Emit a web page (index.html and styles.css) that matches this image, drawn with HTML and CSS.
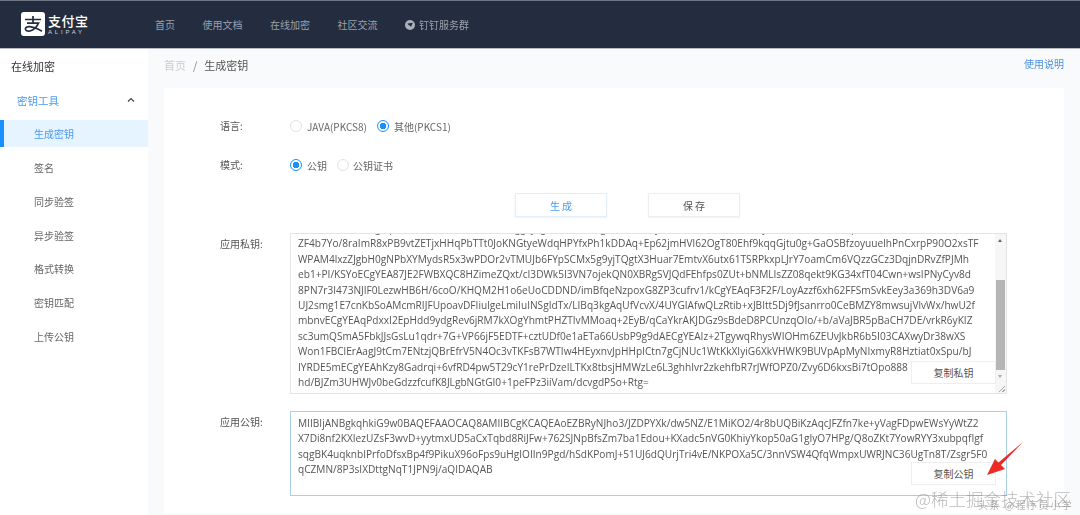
FILE: index.html
```html
<!DOCTYPE html>
<html lang="zh">
<head>
<meta charset="utf-8">
<title>生成密钥</title>
<link rel="stylesheet" href="styles.css">
</head>
<body>
<div class="page">
  <header class="topbar">
    <div class="logo">
      <svg class="logo-mark" viewBox="0 0 24 24" width="24" height="24">
        <rect width="24" height="24" rx="3" fill="#fff"/>
        <path d="M4 7.500h16M12 4v7M6 11.200h11.500c-1.800 3.800-5 7-8.500 7.800-2.800.5-4.600-.5-4.600-2.200 0-2.800 5.600-3.600 16.600 2.400" fill="none" stroke="#232d3f" stroke-width="1.700"/>
      </svg>
      <div class="logo-words">
        <span class="logo-cn">支付宝</span>
        <span class="logo-en">ALIPAY</span>
      </div>
    </div>
    <nav class="nav">
      <a>首页</a>
      <a>使用文档</a>
      <a>在线加密</a>
      <a>社区交流</a>
      <a class="nav-icon">
        <svg viewBox="0 0 10 10" width="10" height="10"><circle cx="5" cy="5" r="5" fill="#aab0ba"/><path d="M2.500 3.500 7.800 2.800 6 7 4.800 5.500 3.500 5z" fill="#232d3f"/></svg>
        钉钉服务群
      </a>
    </nav>
  </header>
  <div class="body">
    <aside class="sidebar">
      <div class="side-title">在线加密</div>
      <div class="side-group"><span>密钥工具</span>
        <svg viewBox="0 0 8 6" width="8" height="6"><path d="M1 4.500 4 1.500 7 4.500" fill="none" stroke="#444" stroke-width="1.200"/></svg>
      </div>
      <ul class="side-list">
        <li class="active">生成密钥</li>
        <li>签名</li>
        <li>同步验签</li>
        <li>异步验签</li>
        <li>格式转换</li>
        <li>密钥匹配</li>
        <li>上传公钥</li>
      </ul>
    </aside>
    <main class="main">
      <div class="crumbs">
        <div><span class="crumb-home">首页</span><span class="crumb-sep">/</span><span class="crumb-now">生成密钥</span></div>
        <a class="help">使用说明</a>
      </div>
      <section class="card">
        <div class="radio-row row-lang">
          <label class="form-label">语言:</label>
          <span class="radio"></span><span class="radio-text wide">JAVA(PKCS8)</span>
          <span class="radio on"></span><span class="radio-text">其他(PKCS1)</span>
        </div>
        <div class="radio-row row-mode">
          <label class="form-label">模式:</label>
          <span class="radio on"></span><span class="radio-text wide">公钥</span>
          <span class="radio"></span><span class="radio-text tight">公钥证书</span>
        </div>
        <div class="actions">
          <button class="btn primary">生 成</button>
          <button class="btn">保 存</button>
        </div>
        <div class="field field-private">
          <label class="form-label top">应用私钥:</label>
          <div class="key-box private">
<pre class="key-text scrolled">MIIEvQIBADANBgkqhkiG9w0BAQEFAASCBKcwggSjAgEAAoIBAQCgRkFHI0mGjf8lkM9heT93Dk1n8TUyIo7b/ivxtRAGIrMCpwkVl+fu
ZF4b7Yo/8raImR8xPB9vtZETjxHHqPbTTt0JoKNGtyeWdqHPYfxPh1kDDAq+Ep62jmHVl62OgT80Ehf9kqqGjtu0g+GaOSBfzoyuuelhPnCxrpP90O2xsTF
WPAM4lxzZJgbH0gNPbXYMydsR5x3wPDOr2vTMUJb6FYpSCMx5g9yjTQgtX3Huar7EmtvX6utx61TSRPkxpLJrY7oamCm6VQzzGCz3DqjnDRvZfPJMh
eb1+PI/KSYoECgYEA87JE2FWBXQC8HZimeZQxt/cI3DWk5I3VN7ojekQN0XBRgSVJQdFEhfps0ZUt+bNMLIsZZ08qekt9KG34xfT04Cwn+wsIPNyCyv8d
8PN7r3I473NJIF0LezwHB6H/6coO/KHQM2H1o6eUoCDDND/imBfqeNzpoxG8ZP3cufrv1/kCgYEAqF3F2F/LoyAzzf6xh62FFSmSvkEey3a369h3DV6a9
UJ2smg1E7cnKbSoAMcmRIJFUpoavDFIiulgeLmiIuINSgIdTx/LIBq3kgAqUfVcvX/4UYGIAfwQLzRtib+xJBItt5Dj9fJsanrro0CeBMZY8mwsujVlvWx/hwU2f
mbnvECgYEAqPdxxI2EpHdd9ydgRev6jRM7kXOgYhmtPHZTIvMMoaq+2EyB/qCaYkrAKJDGz9sBdeD8PCUnzqOIo/+b/aVaJBR5pBaCH7DE/vrkR6yKIZ
sc3umQSmA5FbkJJsGsLu1qdr+7G+VP66jF5EDTF+cztUDf0e1aETa66UsbP9g9dAECgYEAIz+2TgywqRhysWIOHm6ZEUvJkbR6b5I03CAXwyDr38wXS
Won1FBClErAagJ9tCm7ENtzjQBrEfrV5N4Oc3vTKFsB7WTIw4HEyxnvJpHHpICtn7gCjNUc1WtKkXIyiG6XkVHWK9BUVpApMyNIxmyR8Hztiat0xSpu/bJ
IYRDE5mECgYEAhKzy8Gadrqi+6vfRD4pw5T29cY1rePrDzeILTKx8tbsjHMWzLe6L3ghhIvr2zkehfbR7rJWfOPZ0/Zvy6D6kxsBi7tOpo888
hd/BJZm3UHWJv0beGdzzfcufK8JLgbNGtGI0+1peFPz3iiVam/dcvgdPSo+Rtg=</pre>
            <div class="scrollbar">
              <span class="arrow up"></span>
              <span class="thumb"></span>
              <span class="arrow down"></span>
            </div>
            <button class="btn copy">复制私钥</button>
          </div>
        </div>
        <div class="field field-public">
          <label class="form-label top">应用公钥:</label>
          <div class="key-box public">
<pre class="key-text">MIIBIjANBgkqhkiG9w0BAQEFAAOCAQ8AMIIBCgKCAQEAoEZBRyNJho3/JZDPYXk/dw5NZ/E1MiKO2/4r8bUQBiKzAqcJFZfn7ke+yVagFDpwEWsYyWtZ2
X7Di8nf2KXIezUZsF3wvD+yytmxUD5aCxTqbd8RiJFw+762SJNpBfsZm7ba1Edou+KXadc5nVG0KhiyYkop50aG1gIyO7HPg/Q8oZKt7YowRYY3xubpqfIgf
sqgBK4uqknbIPrfoDfsxBp4f9PikuX96oFps9uHgIOIIn9Pgd/hSdKPomJ+51UJ6dQUrjTri4vE/NKPOXa5C/3nnVSW4QfqWmpxUWRJNC36UgTn8T/Zsgr5F0
qCZMN/8P3sIXDttgNqT1JPN9j/aQIDAQAB</pre>
            <button class="btn copy">复制公钥</button>
          </div>
        </div>
      </section>
    </main>
  </div>
  <svg class="arrow-mark" viewBox="0 0 40 36" width="40" height="36">
    <path d="M37 1 15 24l4 4L1 34l8-16 3.500 3.500z" fill="#ee2a24"/>
  </svg>
  <div class="watermark">@稀土掘金技术社区</div>
  <div class="watermark-small">头条 @程序员小学</div>
</div>
</body>
</html>
```
FILE: styles.css
```css
* { box-sizing: border-box; }
html, body { margin: 0; padding: 0; }
body {
  width: 1080px;
  height: 515px;
  overflow: hidden;
  background: #f9fafb;
  font-family: "Noto Sans CJK SC", "Open Sans", sans-serif;
  color: #555;
}
.page {
  position: relative;
  width: 1080px;
  height: 515px;
  overflow: hidden;
  filter: blur(0.4px);
}
.topbar {
  height: 49px;
  display: flex;
  align-items: center;
  background: #232d3f;
  border-top: 1px solid #6e7685;
  border-bottom: 1px solid #b7bbc2;
  padding-left: 21px;
}
.logo { display: flex; align-items: center; gap: 3px; width: 134px; }
.logo-mark { margin-top: -1px; }
.logo-words { display: flex; flex-direction: column; color: #fff; }
.logo-cn { font-size: 13px; line-height: 15px; font-weight: 500; letter-spacing: .5px; }
.logo-en { font-size: 6px; line-height: 8px; letter-spacing: 2.800px; font-family: "Liberation Sans", sans-serif; color: #d5d8dd; }
.nav { display: flex; gap: 27.500px; font-size: 10px; color: #9ba1ac; }
.nav a { line-height: 14px; white-space: nowrap; }
.nav-icon { display: flex; align-items: center; gap: 4px; }
.body { display: flex; height: 466px; }
.sidebar { width: 148px; flex: none; background: #fff; }
.side-title { font-size: 11px; color: #333; padding: 9px 0 0 11px; line-height: 16px; height: 33px; }
.side-group {
  display: flex; justify-content: space-between; align-items: center;
  height: 36px; padding: 0 13px 0 17px; font-size: 10.500px; color: #4a9af0;
}
.side-list { list-style: none; margin: 2px 0 0; padding: 0; }
.side-list li { height: 33.800px; line-height: 33px; padding-left: 34px; font-size: 10px; color: #666; }
.side-list li.active { height: 27px; line-height: 27px; margin-bottom: 4px; background: #e6f4ff; color: #4a9af0; border-left: 4px solid #1890ff; padding-left: 30px; }
.main { flex: 1; padding: 0 16px; }
.crumbs { height: 39px; display: flex; justify-content: space-between; padding-top: 8px; font-size: 11px; line-height: 16px; }
.crumb-home { color: #ccc; }
.crumb-sep { color: #888; margin: 0 7px; }
.crumb-now { color: #555; }
.help { color: #4a8fe0; font-size: 10px; line-height: 14px; }
.card { background: #fff; height: 425px; padding: 30px 0 0 56px; }
.form-label { width: 70px; flex: none; font-size: 10px; color: #555; line-height: 14px; }
.radio-row { display: flex; align-items: center; height: 16px; font-size: 10px; color: #666; }
.row-mode { margin-top: 23px; }
.radio { width: 12px; height: 12px; border-radius: 50%; border: 1px solid #e2e2e2; background: #fff; flex: none; margin-right: 5px; }
.radio.on { border-color: #1890ff; background: radial-gradient(circle, #1890ff 0 3px, #fff 3.500px); }
.radio-text.wide { margin-right: 10px; }
.radio-text.tight { margin-left: -1px; }
.actions { display: flex; gap: 41px; margin: 20px 0 16px 295px; }
.btn {
  font-family: inherit; font-size: 10px; color: #555; background: #fff;
  border: 1px solid #eee; box-shadow: 0 1px 2px rgba(0,0,0,.06);
  padding: 0; width: 92px; height: 24px;
}
.btn.primary { color: #4a9af0; border-color: #e4eef6; }
.field { display: flex; }
.field-public { margin-top: 17px; }
.field .top { padding-top: 4px; }
.key-box {
  position: relative; width: 717px; overflow: hidden; background: #fff;
  border: 1px solid #e4e4e4; padding: 0 0 0 7px;
}
.key-box.private { height: 161px; }
.key-box.public { height: 85px; border-color: #a8d0e8; padding-top: 4px; }
.key-text {
  margin: 0; font-family: "Open Sans", sans-serif; font-size: 10.150px; line-height: 15.400px;
  color: #555; white-space: pre;
}
.key-text.scrolled { margin-top: -13px; }
.scrollbar {
  position: absolute; top: 0; right: 0; bottom: 0; width: 11px; background: #f6f6f6;
  display: flex; flex-direction: column;
}
.scrollbar::after {
  content: ""; position: absolute; right: 1px; bottom: 1px; width: 8px; height: 8px;
  background: repeating-linear-gradient(135deg, transparent 0 1.500px, #aaa 1.500px 2.500px);
  clip-path: polygon(100% 0, 100% 100%, 0 100%);
}
.thumb { display: block; height: 90px; background: #b5b5b5; margin: 0 1px; flex: none; }
.arrow { display: block; height: 14px; position: relative; flex: none; }
.arrow.up { height: 46px; }
.arrow.up::before, .arrow.down::before {
  content: ""; position: absolute; left: 3px; top: 5px;
  border-left: 2.500px solid transparent; border-right: 2.500px solid transparent;
}
.arrow.up::before { border-bottom: 3px solid #666; }
.arrow.down::before { border-top: 3px solid #aaa; }
.copy { position: absolute; right: 10px; width: 85px; height: 23px; box-shadow: none; }
.private .copy { bottom: 9px; }
.public .copy { bottom: 10px; }
.arrow-mark { position: absolute; left: 986px; top: 441px; }
.watermark {
  position: absolute; left: 915px; top: 487px; font-size: 17.500px; line-height: 24px;
  font-family: "Noto Sans CJK SC", sans-serif; font-weight: 300; color: rgba(140,140,140,.6); white-space: nowrap;
}
.watermark-small {
  position: absolute; left: 978px; top: 498px; font-size: 10px; line-height: 14px; letter-spacing: 1.500px;
  color: rgba(120,120,120,.55); white-space: nowrap;
}
```
